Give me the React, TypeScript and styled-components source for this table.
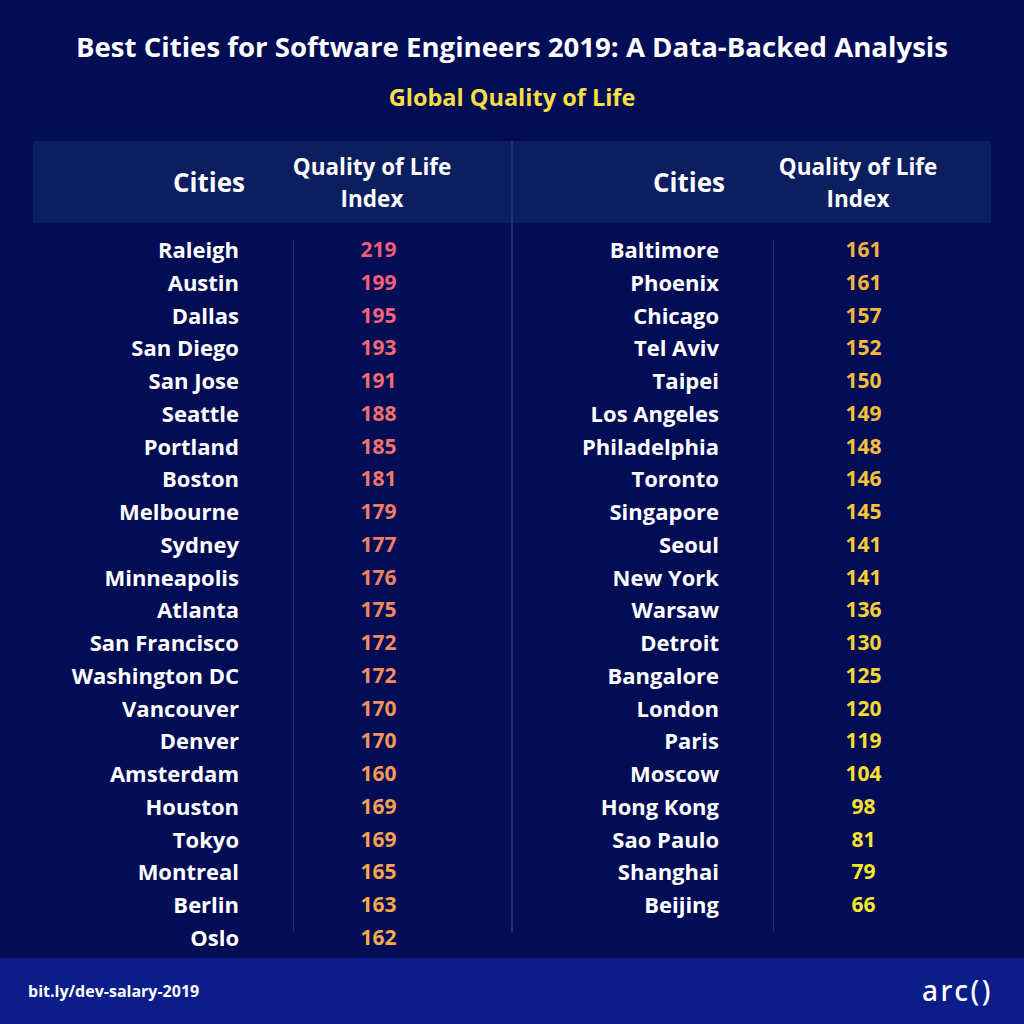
import React from "react";
import styled, { createGlobalStyle } from "styled-components";

const GlobalStyle = createGlobalStyle`
    html, body {
        margin: 0;
        padding: 0;
        background: #030d56;
    }
`

const Page = styled.div`
    width: 1024px;
    height: 1024px;
    background-color: #030d56;
    font-family: "Open Sans", "Liberation Sans", sans-serif;
    font-weight: 700;
    color: #ffffff;
    display: flex;
    flex-direction: column;
    overflow: hidden;
`

const Title = styled.h1`
    margin: 0;
    padding-top: 30px;
    font-size: 27.6px;
    line-height: 32px;
    font-weight: 700;
    text-align: center;
`

const Subtitle = styled.h2`
    margin: 0;
    padding-top: 20px;
    font-size: 23.5px;
    line-height: 30px;
    font-weight: 700;
    text-align: center;
    color: #f6de45;
`

const Table = styled.div`
    margin: 29px 33px 0 33px;
    display: grid;
    grid-template-columns: 1fr 2px 1fr;
    flex: 1;
`

const MidLine = styled.div`
    background-color: #1e3274;
    height: 791px;
`

const Half = styled.div`
    display: flex;
    flex-direction: column;
`

const HeadBand = styled.div`
    height: 82px;
    background-color: #0a1e60;
    display: grid;
    grid-template-columns: 212px 1fr;
    align-items: center;
`

const HeadCities = styled.div`
    font-size: 26px;
    text-align: right;
`

const HeadIndex = styled.div<{ $shift: number }>`
    font-size: 22.5px;
    line-height: 32px;
    text-align: center;
    padding: 2px ${p => Math.max(0, -p.$shift)}px 0 ${p => Math.max(0, p.$shift)}px;
`

const Body = styled.div`
    display: grid;
    grid-template-columns: 206px 54px 170px;
    padding-top: 10px;
`

const Names = styled.div`
    text-align: right;
`

const Values = styled.div<{ $shift: number }>`
    border-left: 1px solid #1e3274;
    text-align: center;
    padding-left: ${p => p.$shift}px;
    margin-top: 6px;
    height: 692px;
`

const Cell = styled.div`
    font-size: 22px;
    line-height: 32.75px;
    white-space: nowrap;
`

const ValueCell = styled(Cell)<{ $color: string }>`
    font-size: 21px;
    color: ${p => p.$color};
`

const ValueList = styled.div`
    margin-top: -6px;
`

const Footer = styled.div`
    height: 66px;
    background-color: #0a1d8a;
    display: flex;
    align-items: center;
    justify-content: space-between;
    padding: 0 31px 0 28px;
`

const Link = styled.div`
    font-size: 16px;
    font-weight: 700;
`

const Logo = styled.div`
    font-family: "Noto Sans", "Open Sans", sans-serif;
    font-size: 28px;
    font-weight: 500;
    letter-spacing: 2.5px;
    padding-bottom: 3px;
`

type Row = [string, number]

const left: Row[] = [
    ["Raleigh", 219], ["Austin", 199], ["Dallas", 195], ["San Diego", 193],
    ["San Jose", 191], ["Seattle", 188], ["Portland", 185], ["Boston", 181],
    ["Melbourne", 179], ["Sydney", 177], ["Minneapolis", 176], ["Atlanta", 175],
    ["San Francisco", 172], ["Washington DC", 172], ["Vancouver", 170], ["Denver", 170],
    ["Amsterdam", 160], ["Houston", 169], ["Tokyo", 169], ["Montreal", 165],
    ["Berlin", 163], ["Oslo", 162],
]

const right: Row[] = [
    ["Baltimore", 161], ["Phoenix", 161], ["Chicago", 157], ["Tel Aviv", 152],
    ["Taipei", 150], ["Los Angeles", 149], ["Philadelphia", 148], ["Toronto", 146],
    ["Singapore", 145], ["Seoul", 141], ["New York", 141], ["Warsaw", 136],
    ["Detroit", 130], ["Bangalore", 125], ["London", 120], ["Paris", 119],
    ["Moscow", 104], ["Hong Kong", 98], ["Sao Paulo", 81], ["Shanghai", 79],
    ["Beijing", 66],
]

const mix = (a: number[], b: number[], t: number) =>
    `rgb(${a.map((v, i) => Math.round(v + (b[i] - v) * t)).join(",")})`

type ColumnProps = { rows: Row[], from: number[], to: number[], headShift: number, shift: number }

const Column = ({ rows, from, to, headShift, shift }: ColumnProps) => (
    <Half>
        <HeadBand>
            <HeadCities>Cities</HeadCities>
            <HeadIndex $shift={headShift}>Quality of Life<br />Index</HeadIndex>
        </HeadBand>
        <Body>
            <Names>
                {rows.map(([city]) => <Cell key={city}>{city}</Cell>)}
            </Names>
            <div />
            <Values $shift={shift}>
                <ValueList>
                    {rows.map(([city, v], i) =>
                        <ValueCell key={city} $color={mix(from, to, i / (rows.length - 1))}>{v}</ValueCell>
                    )}
                </ValueList>
            </Values>
        </Body>
    </Half>
)

const App = () => (
    <>
        <GlobalStyle />
        <Page>
            <Title>Best Cities for Software Engineers 2019: A Data-Backed Analysis</Title>
            <Subtitle>Global Quality of Life</Subtitle>
            <Table>
                <Column rows={left} from={[240, 92, 122]} to={[246, 172, 74]} headShift={-12} shift={0} />
                <MidLine />
                <Column rows={right} from={[246, 176, 64]} to={[246, 234, 44]} headShift={0} shift={10} />
            </Table>
            <Footer>
                <Link>bit.ly/dev-salary-2019</Link>
                <Logo>arc()</Logo>
            </Footer>
        </Page>
    </>
)

export default App
